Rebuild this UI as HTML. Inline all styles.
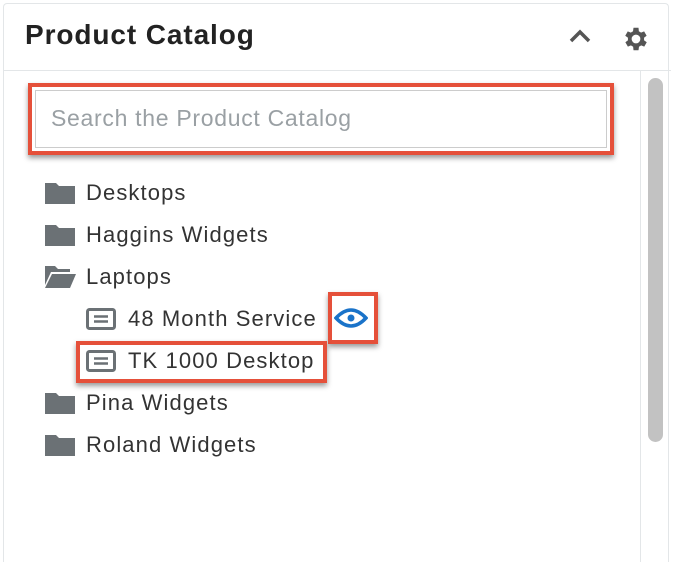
<!DOCTYPE html><html><head><style>
html,body{margin:0;width:674px;height:562px;overflow:hidden}
body{background:#fff;font-family:"Liberation Sans",sans-serif;position:relative}
.panel{position:absolute;left:3px;top:3px;width:666px;height:559px;border:1px solid #e3e6e8;border-bottom:none;border-radius:4px 4px 0 0;box-sizing:border-box}
.hdr{position:absolute;left:3px;top:3px;width:668px;height:67px;border-bottom:1px solid #e3e6e8}
.title{position:absolute;left:25px;top:19px;font-size:28px;font-weight:bold;color:#222;letter-spacing:0.9px}
.sb{position:absolute;left:640px;top:71px;width:1px;height:491px;background:#e3e6e8}
.thumb{position:absolute;left:648px;top:78px;width:15px;height:364px;background:#c2c2c2;border-radius:8px}
.search{position:absolute;left:28px;top:83px;width:578px;height:64px;border:4px solid #e5503a;box-shadow:0 3px 5px rgba(0,0,0,.4)}
.search div{position:absolute;left:3px;top:3px;right:3px;bottom:3px;border:1px solid #ccc;font-size:23px;color:#9aa0a4;padding:14px 0 0 15px;box-sizing:border-box;letter-spacing:0.7px}
.row{position:absolute;font-size:22px;color:#333;height:30px;line-height:30px;letter-spacing:1.1px}
.fold{position:absolute;width:32px;height:24px}
.red{position:absolute;border:4px solid #e5503a;box-shadow:0 3px 5px rgba(0,0,0,.4)}
</style></head><body>
<div class="panel"></div><div class="hdr"></div>
<div class="title">Product Catalog</div>
<svg style="position:absolute;left:568px;top:28px" width="24" height="16"><path d="M3 13 L12 4 L21 13" fill="none" stroke="#555" stroke-width="3.5"/></svg>
<svg style="position:absolute;left:621px;top:24px" width="30" height="30" viewBox="0 0 24 24"><path fill="#555" d="M19.4 13a7.5 7.5 0 000-2l2.1-1.6-2-3.5-2.5 1a7 7 0 00-1.7-1L15 3h-4l-.4 2.9a7 7 0 00-1.7 1l-2.5-1-2 3.5L6.6 11a7.5 7.5 0 000 2l-2.1 1.6 2 3.5 2.5-1a7 7 0 001.7 1L11 21h4l.4-2.9a7 7 0 001.7-1l2.5 1 2-3.5zM13 15.5a3.5 3.5 0 110-7 3.5 3.5 0 010 7z" transform="translate(-1 0)"/></svg>
<div class="sb"></div><div class="thumb"></div>
<div class="search"><div>Search the Product Catalog</div></div>

<svg class="fold" style="left:44px;top:181px" viewBox="0 0 32 24"><path d="M1 2h11l3 3h16v18H1z" fill="#6b7175"/></svg>
<div class="row" style="left:86px;top:178px">Desktops</div>
<svg class="fold" style="left:44px;top:223px" viewBox="0 0 32 24"><path d="M1 2h11l3 3h16v18H1z" fill="#6b7175"/></svg>
<div class="row" style="left:86px;top:220px">Haggins Widgets</div>
<svg class="fold" style="left:44px;top:265px" viewBox="0 0 32 24"><path d="M1 1h10l3 3h12v3H7L1 20z" fill="#6b7175"/><path d="M8 9h24l-6 14H1z" fill="#6b7175"/></svg>
<div class="row" style="left:86px;top:262px">Laptops</div>
<svg style="position:absolute;left:86px;top:308px" width="30" height="22" viewBox="0 0 30 22"><rect x="1.5" y="1.5" width="27" height="19" rx="2" fill="none" stroke="#6b7175" stroke-width="3"/><path d="M8 8.5h14M8 13.5h14" stroke="#6b7175" stroke-width="2.5"/></svg>
<div class="row" style="left:128px;top:304px">48 Month Service</div>
<div class="red" style="left:328px;top:292px;width:42px;height:44px"></div>
<svg style="position:absolute;left:334px;top:306px" width="34" height="24" viewBox="0 0 34 24"><path d="M2 12Q17-4 32 12Q17 28 2 12z" fill="none" stroke="#1a73c9" stroke-width="3.5"/><circle cx="17" cy="12" r="3.5" fill="#1a73c9"/></svg>
<div class="red" style="left:76px;top:341px;width:243px;height:34px"></div>
<svg style="position:absolute;left:86px;top:350px" width="30" height="22" viewBox="0 0 30 22"><rect x="1.5" y="1.5" width="27" height="19" rx="2" fill="none" stroke="#6b7175" stroke-width="3"/><path d="M8 8.5h14M8 13.5h14" stroke="#6b7175" stroke-width="2.5"/></svg>
<div class="row" style="left:128px;top:346px">TK 1000 Desktop</div>
<svg class="fold" style="left:44px;top:391px" viewBox="0 0 32 24"><path d="M1 2h11l3 3h16v18H1z" fill="#6b7175"/></svg>
<div class="row" style="left:86px;top:388px">Pina Widgets</div>
<svg class="fold" style="left:44px;top:433px" viewBox="0 0 32 24"><path d="M1 2h11l3 3h16v18H1z" fill="#6b7175"/></svg>
<div class="row" style="left:86px;top:430px">Roland Widgets</div>
</body></html>
